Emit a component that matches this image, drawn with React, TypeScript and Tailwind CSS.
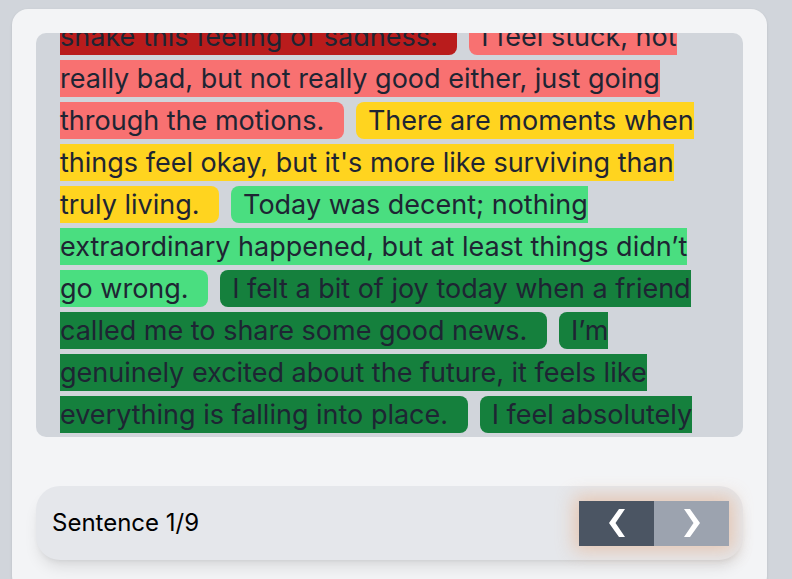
import { useEffect, useRef } from "react";

type Mood = "awful" | "bad" | "meh" | "good" | "great";

interface Sentence {
  text: string;
  mood: Mood;
  breakAt?: string;
}

const moodBg: Record<Mood, string> = {
  awful: "bg-[#b91c1c]",
  bad: "bg-[#f87171]",
  meh: "bg-[#ffd41f]",
  good: "bg-[#4ade80]",
  great: "bg-[#15803d]",
};

const sentences: Sentence[] = [
  { text: "I feel completely overwhelmed and hopeless today.", mood: "awful" },
  { text: "No matter how hard I try, I just can't shake this feeling of sadness.", mood: "awful", breakAt: "shake" },
  { text: "I feel stuck, not really bad, but not really good either, just going through the motions.", mood: "bad" },
  { text: "There are moments when things feel okay, but it's more like surviving than truly living.", mood: "meh" },
  { text: "Today was decent; nothing extraordinary happened, but at least things didn’t go wrong.", mood: "good" },
  { text: "I felt a bit of joy today when a friend called me to share some good news.", mood: "great" },
  { text: "I’m genuinely excited about the future, it feels like everything is falling into place.", mood: "great" },
  { text: "I feel absolutely wonderful, full of energy and grateful for every little moment.", mood: "great" },
];

function Chevron({ dir }: { dir: "left" | "right" }) {
  return (
    <svg width="16" height="28" viewBox="0 0 16 28" className="block">
      {dir === "left" ? (
        <polygon points="10,0 16,0 6.5,14 16,28 10,28 0,14" fill="white" />
      ) : (
        <polygon points="0,0 6,0 16,14 6,28 0,28 9.5,14" fill="white" />
      )}
    </svg>
  );
}

export default function App() {
  const scroller = useRef<HTMLDivElement>(null);
  const marker = useRef<HTMLSpanElement>(null);

  useEffect(() => {
    if (scroller.current && marker.current) {
      scroller.current.scrollTop = marker.current.offsetTop + 13;
    }
  }, []);

  return (
    <div className="min-h-screen bg-[#d1d5db] pt-[9px] pl-3 font-['Inter',sans-serif]">
      <div className="w-[755px] rounded-2xl bg-[#f3f4f6] p-6 pb-8 shadow-sm">
        {/* Text viewer */}
        <div
          ref={scroller}
          className="relative h-[404px] overflow-hidden rounded-[10px] bg-[#d1d5db] p-6"
        >
          <p className="text-[27px] leading-[42px] text-[#1e2533]">
            {sentences.map((s, i) => {
              const cut = s.breakAt ? s.text.indexOf(s.breakAt) : -1;
              return (
                <span key={i} className={`${moodBg[s.mood]} mr-3 rounded-lg px-3 py-0.5`}>
                  {cut > 0 ? (
                    <>
                      {s.text.slice(0, cut)}
                      <br />
                      <span ref={marker} />
                      {s.text.slice(cut)}{" "}
                    </>
                  ) : (
                    <>{s.text}{" "}</>
                  )}
                </span>
              );
            })}
          </p>
        </div>

        {/* Controls */}
        <div className="mt-[49px] flex h-[74px] items-center justify-between rounded-3xl bg-[#e5e7eb] pl-4 pr-[14px] shadow-lg">
          <span className="text-2xl text-black">Sentence 1/9</span>
          <div className="flex shadow-[0_0_18px_5px_rgba(230,160,110,0.45)]">
            <button className="flex h-[45px] w-[75px] items-center justify-center bg-[#4b5563]">
              <Chevron dir="left" />
            </button>
            <button className="flex h-[45px] w-[75px] items-center justify-center bg-[#9ca3af]">
              <Chevron dir="right" />
            </button>
          </div>
        </div>
      </div>
    </div>
  );
}
